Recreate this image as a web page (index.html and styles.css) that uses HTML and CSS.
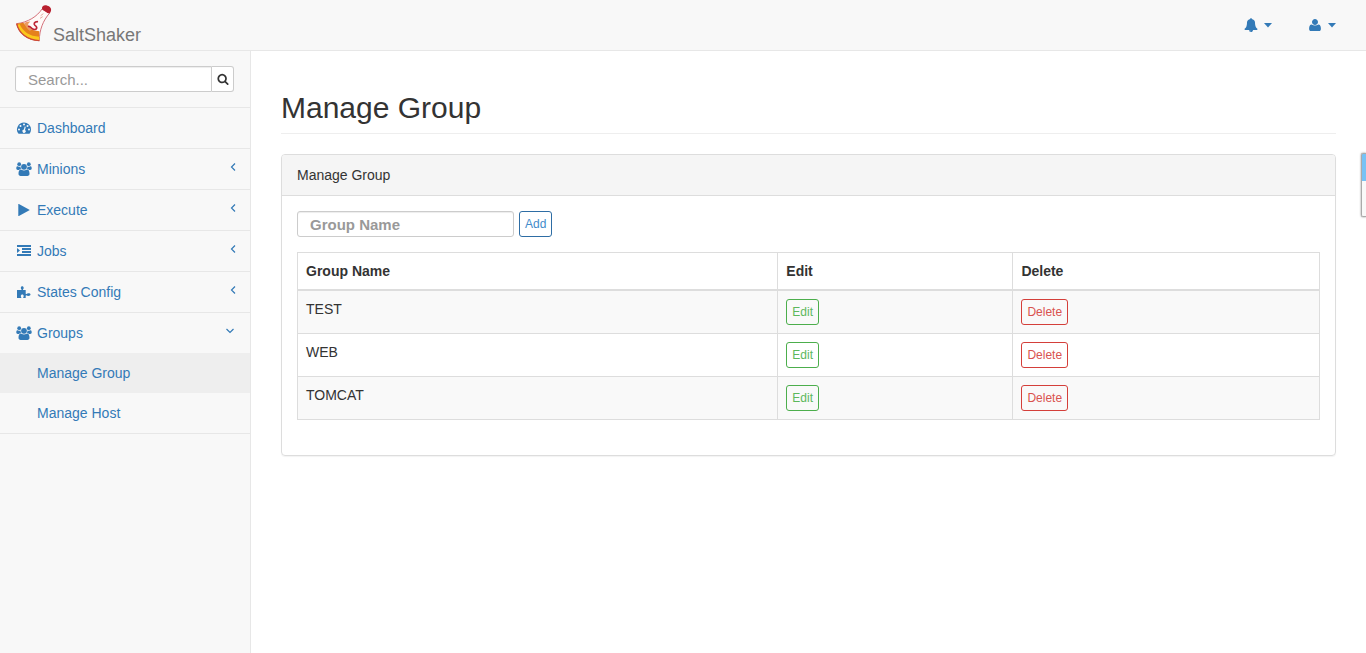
FILE: index.html
```html
<!DOCTYPE html>
<html lang="en">
<head>
<meta charset="utf-8">
<meta name="viewport" content="width=device-width, initial-scale=1">
<title>SaltShaker - Manage Group</title>
<link rel="stylesheet" href="styles.css">
</head>
<body>
<svg class="sprite" aria-hidden="true">
  <symbol id="caret" viewBox="0 0 8 14"><path d="M0 5h8L4 9.500z"/></symbol>
  <symbol id="bell" viewBox="0 0 1792 1792"><path d="M912 1696q0-16-16-16-59 0-101.500-42.500t-42.500-101.500q0-16-16-16t-16 16q0 73 51.500 124.500t124.500 51.500q16 0 16-16zm816-288q0 52-38 90t-90 38h-448q0 106-75 181t-181 75-181-75-75-181h-448q-52 0-90-38t-38-90q50-42 91-88t85-119.500 74.500-158.500 50-206 19.500-260q0-152 117-282.500t307-158.500q-8-19-8-39 0-40 28-68t68-28 68 28 28 68q0 20-8 39 190 28 307 158.500t117 282.500q0 139 19.500 260t50 206 74.500 158.500 85 119.500 91 88z"/></symbol>
  <symbol id="user" viewBox="0 0 1792 1792"><path d="M1650 1399q0 109-62.500 187t-150.500 78h-1082q-88 0-150.500-78t-62.500-187q0-85 8.500-160.500t31.500-152 58.500-131 94-89 134.500-34.500q195 128 427 128t427-128q76 0 134.500 34.500t94 89 58.500 131 31.500 152 8.500 160.500zM1280 512q0 159-112.500 271.500t-271.500 112.500-271.500-112.500-112.500-271.500 112.500-271.500 271.500-112.500 271.500 112.500 112.500 271.500z"/></symbol>
  <symbol id="search" viewBox="0 0 1792 1792"><path d="M1216 832q0-185-131.500-316.500t-316.500-131.500-316.500 131.500-131.500 316.500 131.500 316.500 316.500 131.500 316.500-131.500 131.500-316.500zm512 832q0 52-38 90t-90 38q-54 0-90-38l-343-342q-179 124-399 124-143 0-273.500-55.500t-225-150-150-225-55.500-273.500 55.500-273.500 150-225 225-150 273.500-55.500 273.500 55.500 225 150 150 225 55.500 273.500q0 220-124 399l343 343q37 37 37 90z"/></symbol>
  <symbol id="dashboard" viewBox="0 0 16 14"><path fill-rule="evenodd" d="M8 1.500a7 7 0 0 1 7 7c0 1.500-.4 2.700-1.100 3.800-.2.300-.4.400-.7.400H2.800c-.3 0-.5-.1-.7-.4A7 7 0 0 1 8 1.500zM3 7.500a1 1 0 1 0 0 2 1 1 0 0 0 0-2zm1.500-3.500a1 1 0 1 0 0 2 1 1 0 0 0 0-2zM8 2.500a1 1 0 1 0 0 2 1 1 0 0 0 0-2zm3.500 1.500a1 1 0 1 0 0 2 1 1 0 0 0 0-2zM13 7.500a1 1 0 1 0 0 2 1 1 0 0 0 0-2zM8.700 5.500l-.8 3.100a1.600 1.600 0 1 0 1.100.3l.8-3.100z"/></symbol>
  <symbol id="users" viewBox="0 0 16 14"><circle cx="3.200" cy="2.200" r="1.900"/><circle cx="12.800" cy="2.200" r="1.900"/><circle cx="8" cy="4.800" r="2.900"/><path d="M.3 6.600c0-1.500.3-2.300 1.200-2.300.5 0 .9.500 1.900.5.500 0 .9-.1 1.100-.2C4.500 5.700 4.700 6.300 5 7c-.9 0-1.600.3-2.100 1H1.800C.8 8 .3 7.500.3 6.600zM15.700 6.600c0-1.500-.3-2.300-1.200-2.300-.5 0-.9.500-1.900.5-.5 0-.9-.1-1.100-.2 0 1.100-.2 1.700-.5 2.400.9 0 1.600.3 2.100 1h1.100c1 0 1.500-.5 1.500-1.400zM2.500 11.800c0-2.700.7-4.300 2.400-4.300.6 0 1.300.9 3.100.9s2.500-.9 3.100-.9c1.700 0 2.400 1.600 2.400 4.300 0 1.400-.8 2.100-2.100 2.100H4.600c-1.300 0-2.100-.7-2.100-2.100z"/></symbol>
  <symbol id="play" viewBox="0 0 16 14"><path d="M2.300 1.300c0-.4.300-.5.600-.3l10.500 5.700c.3.200.3.400 0 .6L2.900 13c-.3.200-.6.100-.6-.3z"/></symbol>
  <symbol id="indent" viewBox="0 0 16 14"><path d="M1 1h14v2H1zM6 4h9v2H6zM6 7h9v2H6zM1 10h14v2H1zM1 4l3 2.500L1 9z"/></symbol>
  <symbol id="puzzle" viewBox="0 0 16 14"><path d="M1 5h4.200c.4 0 .5-.3.300-.6-.4-.5-.7-.9-.7-1.500C4.800 1.900 5.400 1.200 6.200 1.200s1.500.7 1.500 1.700c0 .6-.3 1-.7 1.500-.2.300-.1.600.3.600h2.400v3.500c0 .5.500.7.900.4.500-.4.900-.6 1.600-.6 1.600 0 2.300.5 2.300 1.300s-.7 1.400-2.300 1.400c-.7 0-1.100-.2-1.600-.5-.4-.3-.9-.1-.9.400V13H7.600c-.5 0-.6-.3-.4-.7.300-.5.500-.8.500-1.400 0-.9-.6-1.500-1.400-1.500s-1.500.6-1.500 1.500c0 .6.200.9.500 1.400.2.400.1.700-.4.700H1z"/></symbol>
  <symbol id="left" viewBox="0 0 8 10"><path d="M6 1.500L2.500 5 6 8.500" fill="none" stroke="currentColor" stroke-width="1.200"/></symbol>
  <symbol id="down" viewBox="0 0 10 10"><path d="M1.500 3L5 6.500 8.500 3" fill="none" stroke="currentColor" stroke-width="1.200"/></symbol>
</svg>

<header class="topbar">
  <a class="brand" href="#">
    <svg class="brand-logo" viewBox="3 3 114 120" aria-hidden="true">
      <path d="M84 18C70 40 42 58 8 62c6 28 32 50 68 51 0-32 11-60 31-83z" fill="#fffaf8" stroke="#d4707a" stroke-width="3"/>
      <path d="M8 62l20-3c7 7 11 12 17 16 8 6 18 8 31 10l-1 28C38 111 14 90 8 62z" fill="#e5811d"/>
      <path d="M10 65l7-1c10 22 30 37 59 37v11C38 110 16 91 10 65z" fill="#fbc81b"/>
      <path d="M8 62c6 28 32 50 68 51" fill="none" stroke="#cc4a38" stroke-width="4"/>
      <path d="M30 59c6 0 13-5 19-3-8 5-9 10-2 16 6 5 6 8 1 12-8-6-14-15-18-25z" fill="#eb9860"/>
      <path d="M70 56c-9 0-12 7-7 11 9 6 5 14-4 12-9-1-8-10-15-9" fill="none" stroke="#bd2634" stroke-width="5" stroke-linecap="round"/>
      <path d="M80 38l8-6M78 46l8-5" stroke="#e5aaa2" stroke-width="3"/>
      <path d="M84 17c-1-8 7-12 16-9 9 2 14 10 10 18-2 7-9 6-14 1-5-5-9-4-12-10z" fill="#b8202f"/>
    </svg>
    <span class="brand-name">SaltShaker</span>
  </a>
  <nav class="top-links" aria-label="Account">
    <a class="top-link" href="#" aria-label="Alerts"><svg class="icon"><use href="#bell"/></svg><svg class="caret"><use href="#caret"/></svg></a>
    <a class="top-link" href="#" aria-label="User"><svg class="icon"><use href="#user"/></svg><svg class="caret"><use href="#caret"/></svg></a>
  </nav>
</header>

<div class="layout">
  <aside class="sidebar">
    <form class="search" role="search">
      <input class="field search-field" type="text" placeholder="Search..." aria-label="Search">
      <button class="search-button" type="button" aria-label="Search"><svg class="search-icon"><use href="#search"/></svg></button>
    </form>
    <ul class="menu">
      <li class="menu-item"><a class="menu-link" href="#"><svg class="menu-icon"><use href="#dashboard"/></svg>Dashboard</a></li>
      <li class="menu-item"><a class="menu-link" href="#"><svg class="menu-icon"><use href="#users"/></svg>Minions<svg class="arrow"><use href="#left"/></svg></a></li>
      <li class="menu-item"><a class="menu-link" href="#"><svg class="menu-icon"><use href="#play"/></svg>Execute<svg class="arrow"><use href="#left"/></svg></a></li>
      <li class="menu-item"><a class="menu-link" href="#"><svg class="menu-icon"><use href="#indent"/></svg>Jobs<svg class="arrow"><use href="#left"/></svg></a></li>
      <li class="menu-item"><a class="menu-link" href="#"><svg class="menu-icon"><use href="#puzzle"/></svg>States Config<svg class="arrow"><use href="#left"/></svg></a></li>
      <li class="menu-item"><a class="menu-link" href="#"><svg class="menu-icon"><use href="#users"/></svg>Groups<svg class="arrow arrow-down"><use href="#down"/></svg></a>
        <ul class="submenu">
          <li><a class="submenu-link active" href="#">Manage Group</a></li>
          <li><a class="submenu-link" href="#">Manage Host</a></li>
        </ul>
      </li>
    </ul>
  </aside>

  <main class="content">
    <h1 class="page-title">Manage Group</h1>
    <section class="panel">
      <div class="panel-heading">Manage Group</div>
      <div class="panel-body">
        <form class="add-form">
          <input class="field group-field" type="text" placeholder="Group Name" aria-label="Group Name">
          <button class="button button-add" type="button">Add</button>
        </form>
        <table class="groups">
          <thead><tr><th class="col-name">Group Name</th><th class="col-edit">Edit</th><th class="col-delete">Delete</th></tr></thead>
          <tbody>
            <tr><td>TEST</td><td><button class="button button-edit" type="button">Edit</button></td><td><button class="button button-delete" type="button">Delete</button></td></tr>
            <tr><td>WEB</td><td><button class="button button-edit" type="button">Edit</button></td><td><button class="button button-delete" type="button">Delete</button></td></tr>
            <tr><td>TOMCAT</td><td><button class="button button-edit" type="button">Edit</button></td><td><button class="button button-delete" type="button">Delete</button></td></tr>
          </tbody>
        </table>
      </div>
    </section>
  </main>
</div>
<div class="side-tab" aria-hidden="true"></div>
</body>
</html>
```
FILE: styles.css
```css
* { box-sizing: border-box; }

body {
  display: flex;
  flex-direction: column;
  min-height: 100vh;
  margin: 0;
  background: #f8f8f8;
  color: #333;
  font: 14px/20px "Liberation Sans", Arial, sans-serif;
}

a { color: #337ab7; text-decoration: none; }
ul { margin: 0; padding: 0; list-style: none; }
svg { fill: currentColor; flex: none; }
input, button { font-family: inherit; }

.sprite { position: absolute; width: 0; height: 0; }

.topbar {
  display: flex;
  justify-content: space-between;
  height: 51px;
  padding: 0 30px 0 15px;
  border-bottom: 1px solid #e7e7e7;
}

.brand { display: flex; align-items: flex-start; color: #777; }
.brand-logo { width: 38px; height: 40px; margin-top: 4px; }
.brand-name { margin-top: 25px; font-size: 18px; line-height: 20px; }

.top-links { display: flex; align-items: center; gap: 36px; }
.top-link { display: flex; align-items: center; gap: 6px; }
.icon { width: 14px; height: 14px; }
.caret { width: 8px; height: 14px; }

.layout { display: flex; flex: 1; }

.sidebar {
  flex: none;
  width: 251px;
  border-right: 1px solid #e7e7e7;
}

.search {
  display: flex;
  padding: 15px 16px 15px 15px;
  border-bottom: 1px solid #e7e7e7;
}

.field {
  height: 26px;
  padding: 0 12px;
  border: 1px solid #ccc;
  border-radius: 3px;
  background: #fff;
  box-shadow: inset 0 1px 1px rgba(0, 0, 0, .075);
  color: #555;
  font-size: 15px;
}
.field::placeholder { color: #999; opacity: 1; }

.search-field {
  flex: 1;
  min-width: 0;
  border-radius: 3px 0 0 3px;
}

.search-button {
  display: flex;
  align-items: center;
  justify-content: center;
  width: 22px;
  height: 26px;
  padding: 0;
  border: 1px solid #ccc;
  border-left: 0;
  border-radius: 0 3px 3px 0;
  background: #fff;
  color: #333;
}
.search-icon { width: 12px; height: 12px; }

.menu-item { border-bottom: 1px solid #e7e7e7; }
.menu-link {
  display: flex;
  align-items: center;
  padding: 10px 15px;
}
.menu-icon { width: 16px; height: 14px; margin: 0 5px 0 1px; }
.arrow { width: 8px; height: 10px; margin: 0 -2px 4px auto; }
.arrow-down { width: 10px; margin-right: 0; }

.submenu-link { display: block; padding: 10px 15px 10px 37px; }
.active { background: #eee; }

.content {
  flex: 1;
  min-width: 0;
  padding: 0 30px;
  background: #fff;
}

.page-title {
  margin: 40px 0 20px;
  padding-bottom: 9px;
  border-bottom: 1px solid #eee;
  font-size: 30px;
  font-weight: 400;
  line-height: 33px;
}

.panel {
  border: 1px solid #ddd;
  border-radius: 4px;
  box-shadow: 0 1px 1px rgba(0, 0, 0, .05);
}
.panel-heading {
  padding: 10px 15px;
  border-bottom: 1px solid #ddd;
  border-radius: 3px 3px 0 0;
  background: #f5f5f5;
}
.panel-body { padding: 15px 15px 35px; }

.add-form { display: flex; gap: 5px; margin-bottom: 15px; }
.group-field { width: 217px; font-weight: 700; }

.button {
  display: block;
  height: 26px;
  padding: 0 5px;
  border: 1px solid;
  border-radius: 3px;
  background: transparent;
  font-size: 12px;
  line-height: 16px;
}
.button-add { border-color: #2e6da4; color: #428bca; }
.button-edit { border-color: #4cae4c; color: #5cb85c; }
.button-delete { border-color: #d43f3a; color: #d9534f; }

.groups { width: 100%; border-collapse: collapse; table-layout: fixed; }
.groups th, .groups td {
  padding: 8px;
  border: 1px solid #ddd;
  text-align: left;
  vertical-align: top;
}
.groups th { border-bottom-width: 2px; }
.groups tbody tr:nth-child(odd) { background: #f9f9f9; }
.col-name { width: 47%; }
.col-edit { width: 23%; }
.col-delete { width: 30%; }

.side-tab {
  position: fixed;
  top: 153px;
  right: 0;
  width: 5px;
  height: 64px;
  border: 1px solid #aaa;
  border-right: 0;
  border-radius: 2px 0 0 2px;
  background: linear-gradient(#76c2f5 27px, #f9f9f9 27px);
  box-shadow: 0 0 2px rgba(0, 0, 0, .5);
}
```
